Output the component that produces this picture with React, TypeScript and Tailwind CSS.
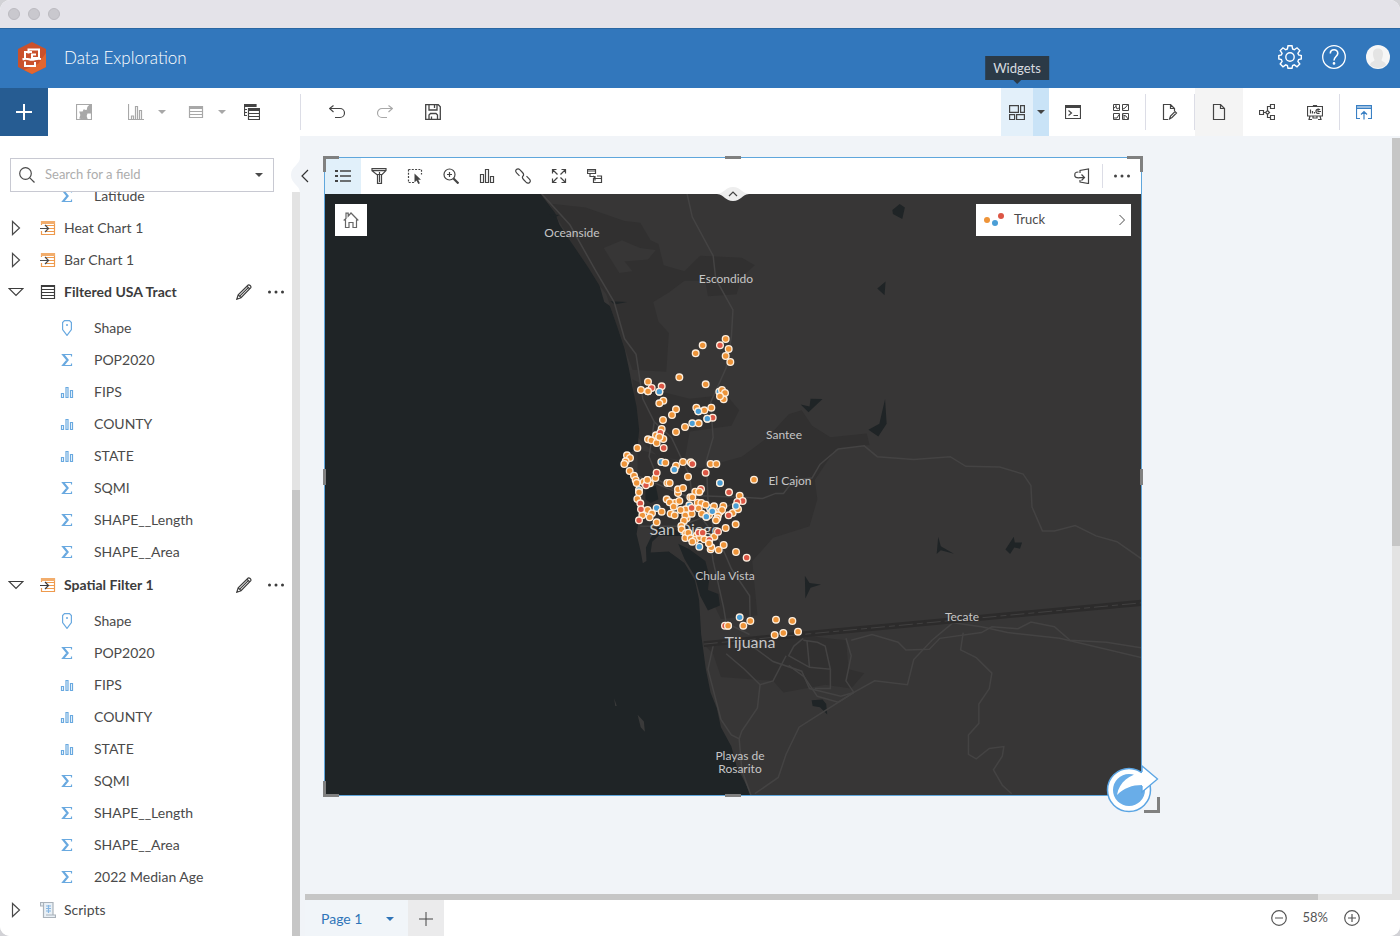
import React from 'react';

type IconName =
  | 'map' | 'chart' | 'table' | 'tables' | 'undo' | 'redo' | 'save'
  | 'widgets' | 'console' | 'gallery' | 'pageEdit' | 'page' | 'model' | 'report' | 'publish'
  | 'legend' | 'filter' | 'select' | 'zoom' | 'bars' | 'link' | 'expand' | 'nested' | 'export' | 'dots'
  | 'home' | 'search' | 'pencil' | 'result' | 'dataset' | 'script' | 'shape' | 'sigma' | 'field'
  | 'right' | 'down' | 'minus' | 'plus';

const ICONS: Record<IconName, React.ReactNode> = {
  map: (
    <>
      <path d="M.5.5h15v15H.5z" />
      <path d="M15 1v8h-4l-1 3 1 3H7l-3-1 1-3-1-3h3l1-2 3 1 1-4 2-2z" fill="currentColor" />
    </>
  ),
  chart: <path d="M.5 0v15.500H16M3.500 15v-3h2v3M7.500 15V2.500h2V15M11.500 15V6.500h2V15" />,
  table: (
    <>
      <path d="M1.500 2.500h13v11h-13zM1.500 7.500h13M1.500 10.500h13" />
      <path d="M1 2h14v3H1z" fill="currentColor" stroke="none" />
    </>
  ),
  tables: (
    <>
      <path d="M12 3V.5H.5v11H3M.5 5.500H3M.5 8.500H3M4.500 4.500h11v11h-11zM4.500 9.500h11M4.500 12.500h11" />
      <path d="M0 0h12v3H0zM4 4h12v3H4z" fill="currentColor" stroke="none" />
    </>
  ),
  undo: <path d="M4.500 1.500l-4 3 4 3.500M.5 4.500H11a4.500 4.500 0 0 1 0 9H6" />,
  redo: <path d="M11.500 1.500l4 3-4 3.500M15.500 4.500H5a4.500 4.500 0 0 0 0 9h5" />,
  save: <path d="M.7.7h12.600l2 2v12.600H.7zM4 1v5h8V1M9.500 1v3M4 15.300V11l1.500-1.500H11l1.500 1.500v4.300M6.500 15v-2.500" strokeWidth="1.300" />,
  widgets: <path d="M.6 1.600h8.800v6.800H.6zM11.600 1.600h3.800v6.800h-3.800zM.6 10.600h5v5h-5zM7.600 10.600h7.800v5H7.600z" />,
  console: (
    <>
      <path d="M.5 1.500h15v13H.5zM3.500 6.500l3 2.500-3 2.500M8.500 11.500H13" />
      <path d="M0 1h16v3H0z" fill="currentColor" stroke="none" />
    </>
  ),
  gallery: (
    <path d="M.5.5h6v6h-6zM9.500.5h6v6h-6zM.5 9.500h6v6h-6zM9.500 9.500h6v6h-6zM1 4l2-1.500L4 5l2-1M10 5l2-1 3-3.500M1 14h3l2-3.500M10 11l3 1 2 3M11 15v-3M3 1v2" strokeWidth="1" />
  ),
  pageEdit: <path d="M6 15.500H1.500V.5h7l4 4V7M8.500.5v4h4M7.500 15l1-3 4.500-4.500 1.500 1.500-4.500 4.500z" />,
  page: <path d="M2.500.5h7l4 4v11h-11zM9.500.5v4h4" />,
  model: <path d="M.5 6.500h4v4h-4zM11.500.5h4v4h-4zM11.500 11.500h4v4h-4zM4.500 8.500H7M8.500 6.500l2 2-2 2-2-2zM8.500 6.500v-4h3M8.500 10.500v3h3" />,
  report: <path d="M.5 2.500h15v9.500H.5zM6.500 2.500v-1h3v1M3 12l-1 3.500h3M13 12l1 3.500h-3M6 12v2h4v-2M3.500 5.500v4M5.500 7v2.500M7.500 8v1.500M12.500 9a2.200 2.200 0 1 1 .5-3M11 5v2.500h3" />,
  publish: <path d="M4 14.500H.5v-13h15v13H12M.5 4.500h15M1 3h14M8 15.500V8M5 10.500l3-3 3 3" />,
  legend: (
    <>
      <path d="M5 3h11M5 8h11M5 13h11" strokeWidth="1.500" />
      <path d="M0 2h3v2H0zM0 7h3v2H0zM0 12h3v2H0z" fill="currentColor" stroke="none" />
    </>
  ),
  filter: <path d="M1 .6h14v2L10.500 7v8.400h-4V7L1 2.600zM1 2.600h14M6.500 6.500h4M8.500 4v10" />,
  select: (
    <>
      <path d="M1.500 1.500h13v5M1.500 1.500v13H8" strokeDasharray="2 1.300" />
      <path d="M7.500 5.500v9l2-2 1.800 3.500 1.600-.8-1.700-3.400h2.800z" fill="currentColor" stroke="none" />
    </>
  ),
  zoom: (
    <>
      <circle cx="6.500" cy="6.500" r="5.500" />
      <path d="M6.500 4v5M4 6.500h5" />
      <path d="M10.500 10.500l5 5" strokeWidth="2.200" />
    </>
  ),
  bars: <path d="M1.500 6.500h3v8h-3zM6.500 1.500h3v13h-3zM11.500 8.500h3v6h-3z" />,
  link: (
    <path d="M4.500 7.800L1.600 4.900C.4 3.600.4 2.400 1.400 1.500s2.400-.9 3.600.3l2.500 2.700c1.300 1.400 1.500 2.600.5 3.700M11.500 8.200l2.900 2.900c1.200 1.300 1.200 2.500.2 3.400s-2.400.9-3.600-.3l-2.500-2.700C7.200 10.100 7 8.900 8 7.800" />
  ),
  expand: <path d="M1.500 5.500v-4h4M1.500 1.500l5 5M10.500 1.500h4v4M14.500 1.500l-5 5M1.500 10.500v4h4M1.500 14.500l5-5M10.500 14.500h4v-4M14.500 14.500l-5-5" />,
  nested: <path d="M.5 1.500h8v4h-8zM.5 3h8M6.500 10.500h8v4h-8zM10 8h4.500v2.500M3 5.500v3h5v4M6 8l2 2" />,
  export: <path d="M6 5V2.500L14.500 1v14.500L6 14v-2M1 6.500c-1 3 2 3.500 5 3.200h4M7.500 6.500l3 3-3 3M4.500 4C1 4 .5 5.500 1 7.500" />,
  dots: (
    <g fill="currentColor" stroke="none">
      <circle cx="1.500" cy="8" r="1.500" />
      <circle cx="8" cy="8" r="1.500" />
      <circle cx="14.500" cy="8" r="1.500" />
    </g>
  ),
  home: <path d="M.7 8.500L3 6.500V1.200h2.200v3L8 1l7.300 7.500M2.500 7.500v8H6v-5h4v5h3.500v-8" />,
  search: (
    <>
      <circle cx="6.500" cy="6.500" r="5.800" />
      <path d="M10.800 10.800l4.700 4.700" />
    </>
  ),
  pencil: <path d="M.8 15.200l1.400-4.400L12.200 1c1-.7 3.300 1.200 2.600 2.600L5 13.700zM2.200 10.800L5 13.700M11 2.200l2.800 2.800M4 11.800l8-8" />,
  result: (
    <>
      <path d="M1.500 5V1.500h13v13h-13V11M6 5.500h8.500M9 8.500h5.500M6 11.500h8.500" stroke="#ee9a4d" />
      <path d="M1 1h14v3H1z" fill="#f2ad6c" stroke="none" />
      <path d="M0 8.500h8M5 5l3.500 3.500L5 12" />
    </>
  ),
  dataset: (
    <>
      <path d="M1.500 1.500h13v13h-13zM1.500 5.500h13M1.500 8.500h13M1.500 11.500h13" />
      <path d="M1 1h14v2H1z" fill="currentColor" stroke="none" />
    </>
  ),
  script: (
    <>
      <path d="M.5.500H13v12.500h2.500v2.500h-12V4h-3zM3.500 4V.5M13 13H6" fill="#e9f0f6" stroke="#aab2ba" />
      <path d="M6 4h5M6 6.500h5M6 9h5M8.500 3v8" stroke="#86b6e2" />
    </>
  ),
  shape: (
    <>
      <path d="M5.500.6h5l1.900 2v7L8 15.400 3.600 9.600v-7z" />
      <circle cx="8" cy="5" r="1" fill="currentColor" stroke="none" />
    </>
  ),
  sigma: <path d="M12.500 4.500v-2h-9L8 8l-4.500 5.500h9v-2M5 3l4.200 5L5 13" />,
  field: <path d="M2.500 9.500h2v4h-2zM7 3.500h2v10H7zM11.500 6.500h2v7h-2z" />,
  right: <path d="M2.500 1.500v13l7-6.500z" />,
  down: <path d="M1 4.500h14L8 11.500z" />,
  minus: (
    <>
      <circle cx="8" cy="8" r="7.300" />
      <path d="M4 8h8" />
    </>
  ),
  plus: (
    <>
      <circle cx="8" cy="8" r="7.300" />
      <path d="M4 8h8M8 4v8" />
    </>
  ),
};

const Icon: React.FC<{ name: IconName; className?: string }> = ({ name, className = 'size-4' }) => (
  <svg viewBox="0 0 16 16" fill="none" stroke="currentColor" strokeWidth="1.200" className={`shrink-0 ${className}`} aria-hidden="true">
    {ICONS[name]}
  </svg>
);

const Caret: React.FC<{ className?: string }> = ({ className = '' }) => (
  <svg viewBox="0 0 8 4" className={`h-1 w-2 shrink-0 fill-current ${className}`} aria-hidden="true">
    <path d="M0 0h8L4 4z" />
  </svg>
);

const ToolButton: React.FC<{ icon: IconName; label: string; className?: string }> = ({ icon, label, className = 'w-12' }) => (
  <button aria-label={label} className={`flex items-center justify-center ${className}`}>
    <Icon name={icon} />
  </button>
);

const Divider = () => <div className="my-1.5 w-px bg-[#dcdde6]" />;

/* ---------- header ---------- */

const Header = () => (
  <header className="flex h-[60px] shrink-0 items-center border-t border-[#2a67a3] bg-[#3277bc] pr-[10px] pb-0.5 pl-[17px] text-white">
    <svg viewBox="0 0 30 34" className="h-[34px] w-[30px]" aria-hidden="true">
      <path d="M15 1l14 7v18l-14 7-14-7V8z" fill="#c9512c" />
      <path d="M29 12v14l-14 7-8-4 14-6z" fill="#e2662f" />
      <path d="M15 11H8v6.500M11.500 12.500V8.500H22v8.500h-7v-3.500h4M5.500 18.500c4-2 6 0 9 .3 3 .3 5-1.800 9.500-.8M8 20.500V25h10v-4" fill="none" stroke="#fff" strokeWidth="2" />
    </svg>
    <h1 className="ml-[17px] text-[17px] font-light">Data Exploration</h1>
    <div className="mb-0.5 ml-auto flex items-center gap-5">
      <button aria-label="Settings">
        <svg viewBox="0 0 24 24" className="size-6" fill="none" stroke="currentColor" strokeWidth="1.400" aria-hidden="true">
          <path d="M10 .8h4l.6 3.200 1.700.7 2.700-1.900 2.800 2.800-1.900 2.700.7 1.700 2.700.5v3.500l-2.700.6-.7 1.700 1.900 2.700-2.800 2.800-2.700-1.900-1.700.7-.6 2.700h-4l-.6-2.700-1.700-.7L5 21.800 2.200 19l1.900-2.700-.7-1.700-2.600-.6v-3.500l2.600-.5.7-1.700L2.200 5.600 5 2.800l2.700 1.900 1.700-.7z" />
          <circle cx="12" cy="12" r="4.200" />
        </svg>
      </button>
      <button aria-label="Help">
        <svg viewBox="0 0 24 24" className="size-6" fill="none" stroke="currentColor" strokeWidth="1.300" aria-hidden="true">
          <circle cx="12" cy="12" r="11.300" />
          <path d="M8.300 8.500c0-5 7.500-5 7.500-.3 0 3.300-3.800 3.300-3.800 7.300" strokeWidth="1.600" />
          <circle cx="12" cy="18.400" r=".7" fill="currentColor" />
        </svg>
      </button>
      <button aria-label="Account">
        <svg viewBox="0 0 24 24" className="size-6" aria-hidden="true">
          <circle cx="12" cy="12" r="12" fill="#f6f6f6" />
          <path d="M4 20c1-4 4-3 4.500-5C5 7 8 3.500 12 3.500s7 3.500 3.500 11.500c.5 2 3.500 1 4.500 5a12 12 0 0 1-16 0z" fill="#e4e4e4" />
        </svg>
      </button>
    </div>
  </header>
);

/* ---------- toolbar ---------- */

const Toolbar = () => (
  <div className="flex h-12 shrink-0 bg-white pr-3 text-[#444]">
    <button aria-label="Add data" className="flex w-12 items-center justify-center bg-[#265c92] text-white">
      <svg viewBox="0 0 16 16" className="size-4" stroke="currentColor" strokeWidth="2" aria-hidden="true">
        <path d="M8 0v16M0 8h16" />
      </svg>
    </button>
    <div className="ml-3 flex text-[#a8a8a8]">
      <ToolButton icon="map" label="Create map" />
      <ToolButton icon="chart" label="Create chart" className="ml-2.5 w-9" />
      <button aria-label="Chart types" className="flex w-4 items-center justify-center"><Caret /></button>
      <ToolButton icon="table" label="Create table" className="ml-2 w-9" />
      <button aria-label="Table types" className="flex w-4 items-center justify-center"><Caret /></button>
    </div>
    <ToolButton icon="tables" label="Attribute tables" className="ml-1 w-9" />
    <div className="my-1.5 ml-[30px] w-px bg-[#dcdde6]" />
    <ToolButton icon="undo" label="Undo" className="ml-3 w-12" />
    <ToolButton icon="redo" label="Redo" className="w-12 text-[#a8a8a8]" />
    <ToolButton icon="save" label="Save" />

    <div className="ml-auto flex">
      <div className="relative flex bg-[#e3f0fa]">
        <ToolButton icon="widgets" label="Widgets" className="w-8" />
        <div role="tooltip" className="absolute bottom-full left-4 mb-2 -translate-x-1/2 bg-[#2b3a47] px-2 text-[13px] leading-6 text-[#d9dde0]">
          Widgets
          <Caret className="absolute top-full left-1/2 -translate-x-1/2 text-[#2b3a47]" />
        </div>
      </div>
      <button aria-label="Widget options" className="flex w-4 items-center justify-center bg-[#c9e3f7]"><Caret /></button>
      <ToolButton icon="console" label="Console" />
      <ToolButton icon="gallery" label="Themes" />
      <Divider />
      <ToolButton icon="pageEdit" label="Edit page" />
      <Divider />
      <ToolButton icon="page" label="Page view" className="w-12 bg-[#f4f4f4]" />
      <ToolButton icon="model" label="Analysis view" />
      <ToolButton icon="report" label="Presentation" />
      <Divider />
      <ToolButton icon="publish" label="Publish" className="w-12 text-[#3a80c4]" />
    </div>
  </div>
);

/* ---------- data pane ---------- */

interface Field {
  icon: IconName;
  name: string;
}

const TRACT_FIELDS: Field[] = [
  { icon: 'shape', name: 'Shape' },
  { icon: 'sigma', name: 'POP2020' },
  { icon: 'field', name: 'FIPS' },
  { icon: 'field', name: 'COUNTY' },
  { icon: 'field', name: 'STATE' },
  { icon: 'sigma', name: 'SQMI' },
  { icon: 'sigma', name: 'SHAPE__Length' },
  { icon: 'sigma', name: 'SHAPE__Area' },
];

const FieldRow: React.FC<Field> = ({ icon, name }) => (
  <li className="flex h-8 items-center pl-[59px]">
    <Icon name={icon} className="size-4 text-[#69a9e0]" />
    <span className="ml-[19px]">{name}</span>
  </li>
);

const ClosedRow: React.FC<Field> = ({ icon, name }) => (
  <li className="flex h-8 items-center pl-2.5">
    <button aria-label={`Expand ${name}`}><Icon name="right" /></button>
    <Icon name={icon} className="ml-3.5 size-4" />
    <span className="ml-2">{name}</span>
  </li>
);

const OpenGroup: React.FC<Field & { fields: Field[] }> = ({ icon, name, fields }) => (
  <li>
    <div className="flex h-9 items-center pr-2 pb-1 pl-2 text-[#3c3c3c]">
      <button aria-label={`Collapse ${name}`}><Icon name="down" /></button>
      <Icon name={icon} className="ml-4 size-4" />
      <span className="ml-2 font-bold">{name}</span>
      <button aria-label={`Rename ${name}`} className="ml-auto"><Icon name="pencil" /></button>
      <button aria-label={`Options for ${name}`} className="ml-4"><Icon name="dots" /></button>
    </div>
    <ul className="pb-px">
      {fields.map((f) => <FieldRow key={f.name} {...f} />)}
    </ul>
  </li>
);

const DataPane = () => (
  <aside className="relative flex w-[300px] shrink-0 flex-col bg-white pt-[22px] text-[#4a4a4a]">
    <div className="mr-[26px] ml-2.5 flex h-[34px] shrink-0 items-center border border-[#c8c9d2] px-2">
      <label htmlFor="field-search" aria-label="Search for a field"><Icon name="search" /></label>
      <input
        id="field-search"
        type="text"
        placeholder="Search for a field"
        className="ml-2.5 min-w-0 flex-1 text-[13px] outline-none placeholder:text-[#adadad]"
      />
      <button aria-label="Filter fields" className="px-0.5"><Caret /></button>
    </div>
    <div className="flex min-h-0 flex-1">
      <div className="min-w-0 flex-1 overflow-hidden">
        <ul className="-mt-3 text-sm">
          <FieldRow icon="sigma" name="Latitude" />
          <ClosedRow icon="result" name="Heat Chart 1" />
          <ClosedRow icon="result" name="Bar Chart 1" />
          <OpenGroup icon="dataset" name="Filtered USA Tract" fields={TRACT_FIELDS} />
          <OpenGroup icon="result" name="Spatial Filter 1" fields={[...TRACT_FIELDS, { icon: 'sigma', name: '2022 Median Age' }]} />
          <ClosedRow icon="script" name="Scripts" />
        </ul>
      </div>
      <div className="flex w-2 flex-col justify-end bg-[#e3e3e3]">
        <div className="h-3/5 bg-[#c6c6c6]" />
      </div>
    </div>
    <button aria-label="Collapse data pane" className="absolute top-[21px] -right-3 h-9 w-[21px]">
      <svg viewBox="0 0 21 36" className="h-9 w-[21px]" aria-hidden="true">
        <path d="M9 0C9 8 0 9 0 18s9 10 9 18h12V0z" fill="#f1f4f8" />
        <path d="M17 13l-6 6 6 6" fill="none" stroke="#333" strokeWidth="1.200" />
      </svg>
    </button>
  </aside>
);

/* ---------- map ---------- */

// incident points in survey units, three to a map pixel
const ORANGE =
  '377,57 386,87 308,76 287,100 377,108 391,126 238,172 317,193 144,185 123,210 144,214 366,210 375,219 371,238 360,229 190,242 178,250 228,268 216,285 189,300 289,263 313,271 334,263 296,310 255,321 228,336 185,327 168,346 190,357 144,358 154,361 170,369 178,351 112,384 81,406 90,414 77,424 73,432 89,453 102,467 107,480 110,489 196,428 228,437 249,426 272,427 332,432 349,432 166,474 264,470 131,486 150,490 142,480 117,517 112,537 202,489 209,489 234,519 234,508 249,504 286,515 298,515 271,532 277,532 462,479 419,527 143,570 156,580 127,586 149,592 185,575 170,607 200,538 226,548 209,547 238,543 221,560 212,581 224,586 257,568 242,570 260,595 256,586 252,602 244,618 245,628 275,581 293,548 304,549 317,554 296,565 306,581 342,559 370,558 360,575 366,570 327,585 354,586 352,595 348,601 398,579 414,568 407,613 377,624 343,650 258,640 256,654 265,638 290,647 272,655 285,660 277,665 300,652 313,658 332,688 334,682 327,670 371,675 356,690 408,696 384,917 430,917 451,903 528,899 577,903 594,935 550,939 524,945';
const RED =
  '360,76 155,204 185,199 338,293 181,338 191,384 277,432 170,458 317,458 138,496 303,507 387,517 428,543 412,546 121,550 123,568 117,601 275,564 386,586 354,635 296,638 308,638 328,660 440,713 375,917';
const BLUE =
  '178,215 358,215 295,274 322,296 277,310 184,426 223,449 117,510 360,489 408,558 170,564 268,556 319,590 330,565 337,574 298,680 419,892';

const parse = (s: string) => s.split(' ').map((p) => p.split(',').map(Number));

const LAYERS = [
  { fill: '#4a9ed6', points: parse(BLUE) },
  { fill: '#ee9439', points: parse(ORANGE) },
  { fill: '#dc5645', points: parse(RED) },
  // points that sit on top of their neighbours
  { fill: '#4a9ed6', points: parse('178,215 295,274 322,296 223,449 360,489 408,558 319,590 337,574') },
  { fill: '#ee9439', points: parse('144,214 178,351 384,917 142,480 298,515 327,670') },
];

const CITIES = [
  { name: 'Oceanside', x: 247, y: 43 },
  { name: 'Escondido', x: 401, y: 89 },
  { name: 'Santee', x: 459, y: 245 },
  { name: 'El Cajon', x: 465, y: 291 },
  { name: 'Chula Vista', x: 400, y: 386 },
  { name: 'Tecate', x: 637, y: 427 },
  { name: 'Playas de', x: 415, y: 566 },
  { name: 'Rosarito', x: 415, y: 579 },
];

const SanDiegoMap = () => (
  <svg viewBox="0 0 816 601" className="block h-auto w-full bg-[#373636]" role="img" aria-label="Map of San Diego">
    <g transform="translate(0 -4) scale(.521 .3865)">
      <g fill="#313030">
        <path d="M430 35L500 45 575 80 605 85 625 130 640 140 650 195 690 210 720 170 800 175 825 195 800 225 790 270 735 275 730 235 690 235 660 265 630 290 640 340 660 370 655 470 590 465 560 350 540 270 500 200z" />
        <path d="M590 490L640 520 700 540 770 530 795 570 780 610 700 625 690 700 640 690 600 640z" />
        <path d="M600 670L720 720 800 690 850 640 890 580 915 570 935 610 970 640 1040 630 1045 660 980 670 940 750 945 800 930 870 860 900 820 960 830 1100 760 1110 720 1000 640 890 600 860z" />
        <path d="M730 1180L900 1150 1000 1165 1005 1240 1035 1250 1010 1290 960 1280 880 1300 860 1270 760 1260 745 1200z" />
      </g>
      <path d="M535 150L570 130 605 150 635 155 620 180 575 185 590 210 565 215z" fill="#373636" />
      <path
        d="M0 0H408L428 35 442 60 450 90 480 150 505 200 527 248 536 290 547 300 560 350 575 410 583 460 590 510 598 560 603 620 600 665 578 690 572 712 585 730 598 775 603 850 598 890 606 935 610 966 617 960 616 925 625 900 640 870 665 870 690 900 680 940 660 935 690 965 710 1010 718 1060 722 1150 731 1240 740 1300 752 1340 760 1390 780 1440 790 1490 805 1530 818 1568H0z"
        fill="#1f2426"
      />
      <path d="M640 895L690 895 700 915 690 950 710 980 690 962 660 935 625 938 628 910z" fill="#353434" />
      <g fill="#1f2426">
        <path d="M678 915L700 930 730 960 738 1000 735 1035 755 1045 758 1075 735 1088 720 1050 710 1000 690 955z" />
        <path d="M615 775L635 765 640 800 625 810 615 800z" />
        <path d="M1089 52L1103 36 1113 45 1108 75 1090 62zM1076 237L1060 255 1074 272zM913 555L930 560 932 540 955 541 928 575zM1075 541L1078 605 1062 638 1043 620 1064 605zM1177 897L1182 922 1207 941 1182 932 1174 942zM1306 930L1322 897 1324 912 1338 912 1334 928 1323 925 1315 942zM921 998L930 1017 952 1021 932 1029 922 1057zM934 1320L955 1318 962 1330 964 1357 950 1338 936 1335zM548 288L580 290 556 296zM430 62L450 65 440 72z" />
      </g>
      <path d="M555 1315L560 1335 557 1335zM600 1358L612 1375 614 1402 606 1390z" fill="#3a3a3a" />
      <g fill="none" stroke="#444343" strokeWidth="1.500">
        {[
          'M416 10L470 90 520 210 555 290 575 385 597 425 610 540 632 600 622 690 640 750 690 790 735 870 745 960 765 1080 770 1120 815 1150',
          'M632 600L665 640 700 740 705 800',
          'M695 10L705 70 745 170 750 230 783 310 780 380 770 460 740 550 745 640 732 700 735 800 745 870 780 980 815 1050 816 1110',
          'M600 740L690 790 800 795 840 798 865 785 880 785 900 750 935 745 950 710 985 670 1035 662 1060 690 1130 697 1200 690 1230 715 1295 717 1340 735 1355 765 1357 820 1377 882 1400 882 1440 868 1480 895 1520 910 1568 955',
          'M605 870L680 870 740 840 800 800',
          'M745 1180L735 1240 760 1370 780 1410 795 1420 800 1500 818 1568',
          'M770 1200L805 1240 835 1280 830 1340 800 1400 795 1420',
          'M820 1180L860 1220 915 1245 930 1290 990 1310 1015 1300',
          'M885 1205L860 1270 835 1280M890 1230L920 1260 945 1310 985 1325 1015 1300 1055 1270 1118 1280 1130 1215 1165 1165 1205 1120 1260 1130 1310 1145 1410 1160 1568 1210',
          'M918 1160L900 1180 890 1205 930 1235 970 1240 960 1180 945 1170 918 1165M930 1235L925 1165M970 1240L970 1290 940 1290M1000 1160L1010 1205 1000 1270 1015 1300 910 1390 885 1460 870 1520 825 1562',
          'M1010 1165L1050 1150 1100 1170 1115 1190 1160 1188 1180 1160 1260 1145 1280 1130 1330 1135 1355 1118 1400 1130 1430 1165 1500 1170 1568 1185',
          'M1225 1145L1220 1190 1250 1210 1280 1250 1275 1290 1255 1330 1255 1380 1235 1410 1235 1460 1250 1472 1275 1445 1303 1440 1300 1465 1283 1500 1300 1540 1318 1562',
        ].map((d) => (
          <path key={d} d={d} vectorEffect="non-scaling-stroke" />
        ))}
        <path d="M727 1175L900 1152 1568 1068" stroke="#2c2b2b" strokeWidth="6" vectorEffect="non-scaling-stroke" />
        <path d="M727 1175L900 1152 1568 1068" stroke="#414040" strokeWidth="1" strokeDasharray="14 4 6 4" vectorEffect="non-scaling-stroke" />
      </g>
    </g>
    <g fill="#c6c6c6" textAnchor="middle" className="text-[12px]">
      {CITIES.map((c) => (
        <text key={c.name} x={c.x} y={c.y}>{c.name}</text>
      ))}
      <text x="360" y="341" className="text-[16px]">San Diego</text>
      <text x="425" y="454" className="text-[16px]">Tijuana</text>
    </g>
    <g transform="translate(275 126) scale(.33333)" stroke="#fdeedd" strokeWidth="4">
      {LAYERS.map((layer, i) => (
        <g key={i} fill={layer.fill}>
          {layer.points.map(([x, y]) => (
            <circle key={`${x}-${y}`} cx={x} cy={y} r="10" />
          ))}
        </g>
      ))}
    </g>
  </svg>
);

const CARD_TOOLS: { icon: IconName; label: string }[] = [
  { icon: 'filter', label: 'Filter' },
  { icon: 'select', label: 'Select' },
  { icon: 'zoom', label: 'Zoom' },
  { icon: 'bars', label: 'Chart' },
  { icon: 'link', label: 'Link' },
  { icon: 'expand', label: 'Full extent' },
  { icon: 'nested', label: 'Layout' },
];

const MapCard = () => (
  <section className="relative w-[818px] max-w-full border border-[#5fa6dc] bg-white">
    <div className="flex h-9 text-[#444]">
      <ToolButton icon="legend" label="Legend" className="w-9 bg-[#e1f0fa]" />
      {CARD_TOOLS.map((t) => (
        <ToolButton key={t.label} icon={t.icon} label={t.label} className="w-9" />
      ))}
      <ToolButton icon="export" label="Export" className="ml-auto w-10" />
      <Divider />
      <ToolButton icon="dots" label="More" className="w-[38px]" />
    </div>
    <div className="relative">
      <SanDiegoMap />
      <button aria-label="Default extent" className="absolute top-2.5 left-2.5 flex size-8 items-center justify-center bg-white text-[#666]">
        <Icon name="home" />
      </button>
      <button className="absolute top-2.5 right-2.5 flex h-8 w-[155px] items-center bg-white pr-1.5 pl-2 text-[13px] text-[#4a4a4a]">
        <svg viewBox="0 0 20 16" className="h-4 w-5" aria-hidden="true">
          <circle cx="3" cy="8" r="3" fill="#ee9439" />
          <circle cx="11" cy="11" r="3" fill="#4a9ed6" />
          <circle cx="17" cy="4" r="3" fill="#dc5645" />
        </svg>
        <span className="ml-2.5">Truck</span>
        <svg viewBox="0 0 6 12" className="ml-auto h-3 w-1.5" fill="none" stroke="currentColor" aria-hidden="true">
          <path d="M.5 1l5 5-5 5" />
        </svg>
      </button>
      <button aria-label="Hide toolbar" className="absolute -top-2 left-1/2 -translate-x-1/2">
        <svg viewBox="0 0 32 16" className="h-4 w-8" aria-hidden="true">
          <path d="M0 8C8 7 8 1 16 1s8 6 16 7c-8 1-8 7-16 7S8 9 0 8z" fill="#eee" />
          <path d="M12 10l4-4 4 4" fill="none" stroke="#444" strokeWidth="1.200" />
        </svg>
      </button>
    </div>

    {/* resize handles */}
    <div className="absolute -top-0.5 -left-0.5 size-4 border-t-3 border-l-3 border-[#808080]" />
    <div className="absolute -top-0.5 -right-0.5 size-4 border-t-3 border-r-3 border-[#808080]" />
    <div className="absolute -bottom-0.5 -left-0.5 size-4 border-b-3 border-l-3 border-[#808080]" />
    <div className="absolute -right-[19px] -bottom-[18px] size-4 border-r-3 border-b-3 border-[#808080]" />
    <div className="absolute -top-0.5 left-1/2 h-[3px] w-4 -translate-x-1/2 bg-[#808080]" />
    <div className="absolute -bottom-0.5 left-1/2 h-[3px] w-4 -translate-x-1/2 bg-[#808080]" />
    <div className="absolute top-1/2 -left-0.5 h-4 w-[3px] -translate-y-1/2 bg-[#808080]" />
    <div className="absolute top-1/2 -right-0.5 h-4 w-[3px] -translate-y-1/2 bg-[#808080]" />

    <button aria-label="Drag to link" className="absolute -right-[18px] -bottom-[18px]">
      <svg viewBox="0 0 54 50" className="h-[50px] w-[54px]" aria-hidden="true">
        <circle cx="24" cy="27" r="21.500" fill="#fff" stroke="#5ba5e4" strokeWidth="1.500" />
        <circle cx="24" cy="27" r="16" fill="#69ade8" />
        <path d="M12 32C14 19 25 11 37 10V3l15.500 13L37 29v-7c-10 0-18 3-25 10z" fill="#fff" />
        <path d="M37 9V3l15.500 13L37 29v-6" fill="none" stroke="#5ba5e4" strokeWidth="1.300" />
      </svg>
    </button>
  </section>
);

/* ---------- workspace ---------- */

const Workspace = () => (
  <main className="flex min-w-0 flex-1 flex-col bg-[#f1f4f8] pt-0.5 pl-[5px]">
    <div className="flex min-h-0 flex-1">
      <div className="min-w-0 flex-1 overflow-hidden pt-[19px] pl-[19px]">
        <MapCard />
      </div>
      <div className="w-2 shrink-0 bg-[#e3e3e3]">
        <div className="h-[54%] bg-[#c6c6c6]" />
      </div>
    </div>
    <div className="flex h-1.5 shrink-0 bg-[#e3e3e3]">
      <div className="flex-37 bg-[#c6c6c6]" />
      <div className="flex-3" />
    </div>
    <footer className="flex h-9 shrink-0 bg-white pr-10 text-[#444]">
      <button className="flex w-[103px] items-center justify-between bg-[#f1f5f9] pt-0.5 pr-3.5 pl-4 text-sm text-[#2f74b8]">
        Page 1
        <Caret />
      </button>
      <button aria-label="Add page" className="flex w-9 items-center justify-center bg-[#ebebec] pt-0.5">
        <svg viewBox="0 0 14 14" className="size-3.5" stroke="currentColor" aria-hidden="true">
          <path d="M7 0v14M0 7h14" />
        </svg>
      </button>
      <div className="ml-auto flex items-center gap-4 text-[13px] text-[#555]">
        <button aria-label="Zoom out"><Icon name="minus" /></button>
        <span>58%</span>
        <button aria-label="Zoom in"><Icon name="plus" /></button>
      </div>
    </footer>
  </main>
);

const App: React.FC = () => (
  <div className="h-screen bg-[#d2d2d6] font-['Lato','Liberation_Sans',sans-serif]">
    <div className="flex h-full flex-col overflow-hidden rounded-[10px] bg-white">
      <div className="flex h-7 shrink-0 items-center gap-2 bg-[#e4e3e9] px-2">
        <span className="size-3 rounded-full border border-[#bbbac0] bg-[#c9c8ce]" />
        <span className="size-3 rounded-full border border-[#bbbac0] bg-[#c9c8ce]" />
        <span className="size-3 rounded-full border border-[#bbbac0] bg-[#c9c8ce]" />
      </div>
      <Header />
      <Toolbar />
      <div className="flex min-h-0 flex-1">
        <DataPane />
        <Workspace />
      </div>
    </div>
  </div>
);

export default App;
